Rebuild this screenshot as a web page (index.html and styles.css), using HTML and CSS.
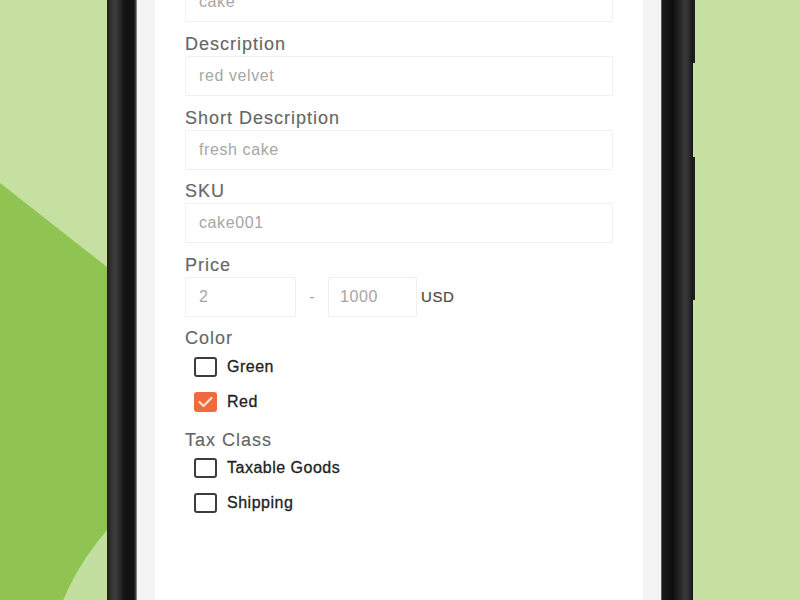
FILE: index.html
```html
<!DOCTYPE html>
<html>
<head>
<meta charset="utf-8">
<link rel="stylesheet" href="styles.css">
</head>
<body>
<div class="stage">
  <div class="deco">
    <svg width="107" height="600" viewBox="0 0 107 600">
      <rect x="0" y="0" width="107" height="600" fill="#c5e0a0"/>
      <polygon points="0,183 107,267 107,600 0,600" fill="#8fc452"/>
      <circle cx="300" cy="700" r="257" fill="#c3dfa0"/>
    </svg>
  </div>
  <div class="phone">
    <div class="frame-left"></div>
    <div class="bezel"></div>
    <div class="screen">
      <form class="form">
        <div class="field">
          <div class="input">cake</div>
        </div>
        <div class="field">
          <div class="label">Description</div>
          <div class="input">red velvet</div>
        </div>
        <div class="field">
          <div class="label">Short Description</div>
          <div class="input">fresh cake</div>
        </div>
        <div class="field">
          <div class="label">SKU</div>
          <div class="input">cake001</div>
        </div>
        <div class="field">
          <div class="label">Price</div>
          <div class="price-row">
            <div class="input price-min">2</div>
            <div class="dash">-</div>
            <div class="input price-max">1000</div>
            <div class="currency">USD</div>
          </div>
        </div>
        <div class="group">
          <div class="label">Color</div>
          <div class="check-row"><span class="box"></span><span class="check-label">Green</span></div>
          <div class="check-row"><span class="box checked"><svg width="23" height="20" viewBox="0 0 23 20"><polyline points="5.5,10 9.5,14 17.5,6" fill="none" stroke="#fde3d6" stroke-width="2.2" stroke-linecap="round" stroke-linejoin="round"/></svg></span><span class="check-label">Red</span></div>
        </div>
        <div class="group">
          <div class="label">Tax Class</div>
          <div class="check-row"><span class="box"></span><span class="check-label">Taxable Goods</span></div>
          <div class="check-row"><span class="box"></span><span class="check-label">Shipping</span></div>
        </div>
      </form>
    </div>
    <div class="bezel"></div>
    <div class="frame-right"></div>
  </div>
  <div class="side">
    <div class="button top"></div>
    <div class="button-gap"></div>
    <div class="button mid"></div>
  </div>
</div>
</body>
</html>
```

FILE: styles.css
```css
* { box-sizing: border-box; }
html, body {
  margin: 0;
  padding: 0;
  width: 800px;
  height: 600px;
  overflow: hidden;
  background: #c5e0a0;
  font-family: "Liberation Sans", Arial, sans-serif;
}
.stage {
  display: flex;
  width: 800px;
  height: 600px;
}
.deco {
  width: 107px;
  height: 600px;
  flex: none;
}
.deco svg { display: block; }
.phone {
  display: flex;
  width: 586px;
  height: 600px;
  flex: none;
}
.frame-left {
  width: 30px;
  background: linear-gradient(to right, #1c1c1c 0px, #2e2e2e 3px, #3d3d3d 8px, #2a2a2a 13px, #141414 17px, #0e0e0e 27px, #4a4a4a 29px, #b8b8b8 30px);
}
.frame-right {
  width: 32px;
  background: linear-gradient(to right, #9a9a9a 0px, #1a1a1a 1px, #0e0e0e 12px, #262626 19px, #3a3a3a 24px, #2c2c2c 28px, #161616 32px);
}
.bezel {
  width: 18px;
  background: #f3f3f3;
}
.screen {
  width: 488px;
  background: #ffffff;
  overflow: hidden;
  padding: 0 30px;
}
.form {
  margin-top: -18px;
}
.field {
  margin-bottom: 10.5px;
}
.field:first-child {
  margin-bottom: 11px;
}
.label {
  height: 22px;
  line-height: 22px;
  font-size: 18px;
  letter-spacing: 1px;
  color: #666666;
  margin-bottom: 1px;
  -webkit-text-stroke: 0.15px #666666;
}
.input {
  height: 40px;
  border: 1px solid #f0f0f0;
  border-radius: 2px;
  padding-left: 13px;
  line-height: 38px;
  font-size: 16px;
  letter-spacing: 0.6px;
  color: #a6a6a6;
  background: #fff;
}
.price-row {
  display: flex;
  align-items: center;
}
.price-min { width: 111px; flex: none; }
.price-max { width: 89px; flex: none; padding-left: 11px; }
.dash {
  width: 32px;
  text-align: center;
  font-size: 16px;
  color: #a6a6a6;
}
.currency {
  margin-left: 4px;
  font-size: 15px;
  letter-spacing: 0.6px;
  color: #4a4a4a;
  -webkit-text-stroke: 0.2px #4a4a4a;
}
.group {
  margin-bottom: 9.5px;
}
.group .label {
  margin-bottom: 0;
}
.check-row {
  display: flex;
  align-items: center;
  height: 35px;
  padding-left: 9px;
}
.box {
  width: 23px;
  height: 20px;
  border: 2px solid #3c3c3c;
  border-radius: 3px;
  flex: none;
}
.box.checked {
  border: none;
  background: #ef6a3d;
}
.box.checked svg {
  display: block;
}
.check-label {
  margin-left: 10px;
  font-size: 16px;
  letter-spacing: 0.5px;
  color: #222222;
  -webkit-text-stroke: 0.3px #222222;
}
.side {
  display: flex;
  flex-direction: column;
  width: 107px;
  flex: none;
}
.button {
  width: 2px;
  background: #1e1e1e;
}
.button.top { height: 63px; }
.button-gap { height: 94px; }
.button.mid { height: 143px; }
```
